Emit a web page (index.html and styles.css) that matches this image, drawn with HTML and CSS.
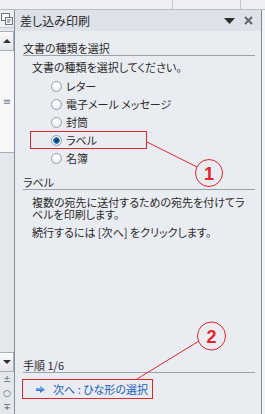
FILE: index.html
```html
<!DOCTYPE html>
<html lang="ja">
<head>
  <meta charset="UTF-8" />
  <title>差し込み印刷</title>
  <link rel="stylesheet" href="styles.css">
</head>
<body>
  <div class="topbar">
    <span class="seg seg-a"></span>
    <span class="seg seg-b"></span>
    <span class="seg seg-c"></span>
  </div>
  <div class="main">
    <div class="ruler">
      <div class="ruler-icon">
        <svg width="12" height="12" viewBox="0 0 12 12">
          <rect x="0.5" y="0.5" width="8" height="7" fill="#fff" stroke="#6b7480"/>
          <rect x="4.5" y="4.5" width="7" height="7" fill="#f4f4f4" stroke="#6b7480"/>
          <path d="M6 7h4M6 9h3" stroke="#6b7480"/>
        </svg>
      </div>
      <div class="sb-btn sb-up"><span class="tri-up"></span></div>
      <div class="sb-thumb"><span class="grip">≡</span></div>
      <div class="sb-track"></div>
      <div class="sb-btn sb-down"><span class="tri-down"></span></div>
      <div class="sb-small">±</div>
      <div class="sb-small">○</div>
      <div class="sb-small">∓</div>
    </div>

    <div class="pane">
      <div class="pane-head">
        <span class="pane-title">差し込み印刷</span>
        <svg class="head-drop" width="11" height="6" viewBox="0 0 11 6"><path d="M0 0h11L5.5 6z" fill="#2d2d2d"/></svg>
        <svg class="head-close" width="9" height="9" viewBox="0 0 9 9"><path d="M1 1l7 7M8 1L1 8" stroke="#5f6670" stroke-width="2"/></svg>
      </div>

      <div class="pane-body">
        <div class="section-title">文書の種類を選択</div>
        <div class="intro">文書の種類を選択してください。</div>
        <div class="radios">
          <div class="radio-row"><span class="radio"></span>レター</div>
          <div class="radio-row"><span class="radio"></span>電子メール メッセージ</div>
          <div class="radio-row"><span class="radio"></span>封筒</div>
          <div class="radio-row marked"><span class="radio checked"></span>ラベル</div>
          <div class="radio-row"><span class="radio"></span>名簿</div>
        </div>

        <div class="section-title second">ラベル</div>
        <p class="desc">複数の宛先に送付するための宛先を付けてラベルを印刷します。</p>
        <p class="desc">続行するには [次へ] をクリックします。</p>

        <div class="footer">
          <div class="section-title">手順 1/6</div>
          <div class="next-link">
            <svg width="9" height="7" viewBox="0 0 9 7"><path d="M0 2h4V0l5 3.5L4 7V5H0z" fill="#3b78d4"/><path d="M0 2h4V0l5 3.5H0z" fill="#7aa8ea"/></svg>
            <span>次へ : ひな形の選択</span>
          </div>
        </div>
      </div>
    </div>

    <div class="edge"></div>
  </div>

  <svg class="marks" width="265" height="414" viewBox="0 0 265 414">
    <line x1="147" y1="142" x2="197" y2="167" stroke="#e3252d" stroke-width="1"/>
    <circle cx="209" cy="173" r="13.5" fill="none" stroke="#e3252d" stroke-width="1"/>
    <text x="209" y="179.5" class="mark-num">1</text>
    <line x1="137" y1="379" x2="199" y2="341" stroke="#e3252d" stroke-width="1"/>
    <circle cx="211.5" cy="336" r="14" fill="none" stroke="#e3252d" stroke-width="1"/>
    <text x="211.5" y="342.5" class="mark-num">2</text>
  </svg>
</body>
</html>
```

FILE: styles.css
```css
:root {
  --pane-bg: #e9ecf1;
  --head-bg: #dde1e8;
  --rule: #9aa1ab;
  --text: #2b2b2b;
  --red: #e3252d;
  --link: #1d5cbc;
}
body {
  margin: 0;
  width: 265px;
  height: 414px;
  overflow: hidden;
  position: relative;
  font-family: "Noto Sans CJK JP", "Noto Sans", sans-serif;
  font-feature-settings: "palt";
  font-size: 11px;
  color: var(--text);
  background: #f3f4f6;
}
.topbar {
  display: flex;
  height: 9px;
  background: #eef0f3;
  border-bottom: 1px solid #b7bec7;
}
.seg { display: block; height: 100%; }
.seg-a { width: 172px; border-right: 1px solid #c2c8d0; }
.seg-b { width: 67px; border-right: 1px solid #c2c8d0; }
.seg-c { flex: 1; }
.main {
  display: flex;
  height: 404px;
}

/* left ruler / scrollbar */
.ruler {
  width: 14px;
  border-right: 1px solid #858d98;
  background: #e4e7eb;
  display: flex;
  flex-direction: column;
}
.ruler-icon {
  height: 17px;
  display: flex;
  align-items: center;
  justify-content: center;
  border-bottom: 1px solid #c3c9d1;
  background: #eef0f3;
}
.sb-btn {
  height: 18px;
  border: 1px solid #a6aeb9;
  border-left: none;
  background: linear-gradient(#fbfbfc, #e3e6ea);
  display: flex;
  align-items: center;
  justify-content: center;
}
.sb-up { margin-top: 3px; }
.tri-up, .tri-down {
  width: 0;
  height: 0;
  border-left: 4px solid transparent;
  border-right: 4px solid transparent;
}
.tri-up { border-bottom: 4px solid #2f2f2f; }
.tri-down { border-top: 4px solid #2f2f2f; }
.sb-thumb {
  height: 101px;
  background: #f6f7f9;
  border-bottom: 1px solid #a6aeb9;
  display: flex;
  align-items: center;
  justify-content: center;
}
.grip {
  font-family: "DejaVu Sans", sans-serif;
  font-size: 10px;
  color: #7d858f;
}
.sb-track { flex: 1; }
.sb-small {
  height: 14px;
  font-family: "DejaVu Sans", sans-serif;
  font-size: 9px;
  line-height: 14px;
  text-align: center;
  color: #555c66;
}

/* task pane */
.pane {
  flex: 1;
  display: flex;
  flex-direction: column;
  background: var(--pane-bg);
}
.pane-head {
  height: 21px;
  background: var(--head-bg);
  display: flex;
  align-items: center;
  padding: 0 8px 0 5px;
}
.pane-title {
  flex: 1;
  font-size: 12px;
  color: #2a2a2a;
}
.head-drop { margin-right: 9px; }
.pane-body {
  flex: 1;
  display: flex;
  flex-direction: column;
  padding: 0 6px 15px 8px;
}
.section-title {
  margin-top: 11px;
  line-height: 13px;
  border-bottom: 1px solid var(--rule);
}
.section-title.second { margin-top: 9px; }
.intro {
  margin: 4px 0 0 9px;
  line-height: 14px;
}
.radios {
  margin-top: 3px;
  display: flex;
  flex-direction: column;
  align-items: flex-start;
}
.radio-row {
  box-sizing: border-box;
  height: 18px;
  margin-left: 7px;
  padding-left: 20px;
  border: 1px solid transparent;
  display: flex;
  align-items: center;
  gap: 4px;
  white-space: nowrap;
}
.radio-row.marked {
  width: 117px;
  border-color: var(--red);
}
.radio {
  box-sizing: border-box;
  flex: none;
  width: 11px;
  height: 11px;
  border-radius: 50%;
  border: 1px solid #98a0ab;
  background: radial-gradient(circle at 40% 35%, #ffffff 20%, #dfe3e8 90%);
}
.radio.checked {
  background: radial-gradient(circle, #0c3e6e 0 1.5px, #1b7cc4 2.5px 3px, #f2f4f7 3.5px);
}
.desc {
  margin: 6px 0 0 9px;
  line-height: 12px;
}
.footer {
  margin-top: auto;
}
.footer .section-title { margin-top: 0; }
.next-link {
  box-sizing: border-box;
  width: 131px;
  height: 20px;
  margin: 6px 0 0 -1px;
  padding-left: 13px;
  border: 1px solid var(--red);
  display: flex;
  align-items: center;
  gap: 8px;
  color: var(--link);
}
.edge {
  width: 3px;
  border-left: 1px solid #7e8691;
  background: #f3f4f6;
}

/* red annotations */
.marks {
  position: absolute;
  top: 0;
  left: 0;
  pointer-events: none;
}
.mark-num {
  font-family: "Liberation Sans", sans-serif;
  font-weight: bold;
  font-size: 18px;
  fill: var(--red);
  text-anchor: middle;
}
```
